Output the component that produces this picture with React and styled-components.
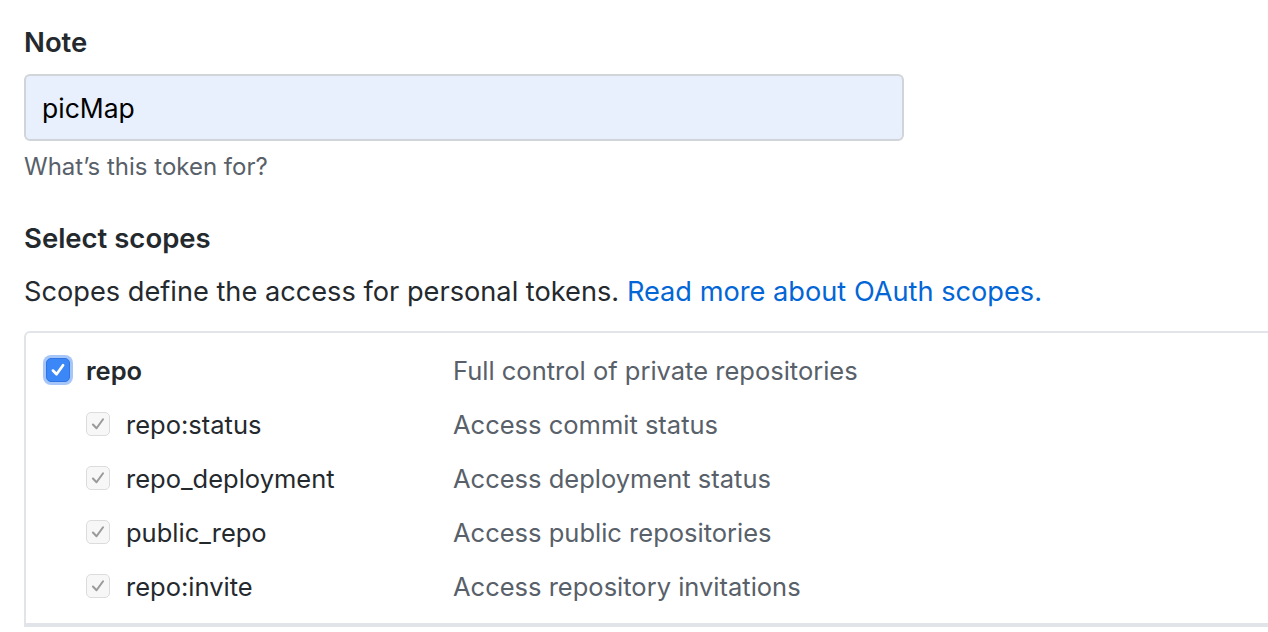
import React from 'react'
import styled, { createGlobalStyle } from 'styled-components'

const GlobalStyle = createGlobalStyle`
  html, body {
    margin: 0;
    padding: 0;
    background: #fff;
    overflow: hidden;
  }
  body {
    font-family: Inter, "Liberation Sans", Arial, sans-serif;
    color: #24292e;
  }
`

const Page = styled.div`
  padding: 26px 0 0 24px;
  width: 1400px;
`

const Label = styled.div`
  font-size: 27.5px;
  font-weight: 600;
  line-height: 32px;
  color: #24292e;
`

const Input = styled.div`
  box-sizing: border-box;
  margin-top: 16px;
  width: 880px;
  height: 67px;
  border: 2px solid #d1d5da;
  border-radius: 6px;
  background: #e8f0fe;
  padding: 0 16px;
  display: flex;
  align-items: center;
  font-size: 26.5px;
  color: #000;
`

const Hint = styled.p`
  margin: 12px 0 0;
  font-size: 24px;
  line-height: 28px;
  color: #586069;
`

const Section = styled.div`
  margin-top: 41px;
`

const Lead = styled.p`
  margin: 22px 0 0;
  font-size: 27.2px;
  line-height: 32px;
  color: #24292e;
`

const Link = styled.a`
  color: #0366d6;
  text-decoration: none;
`

const ScopeBox = styled.div`
  margin-top: 23px;
  border: 2px solid #e1e4e8;
  border-right: none;
  border-radius: 6px 0 0 0;
  padding: 10px 0 0;
  width: 1400px;
`

const Group = styled.div`
  padding-bottom: 10px;
  border-bottom: 2px solid #e1e4e8;
`

const Row = styled.div`
  display: grid;
  grid-template-columns: 427px 1fr;
  align-items: center;
  height: 54px;
`

const Name = styled.div`
  display: flex;
  align-items: center;
  gap: 16px;
  padding-left: ${p => (p.$sub ? '60px' : '20px')};
  font-size: 25.5px;
  font-weight: ${p => (p.$sub ? 'normal' : 600)};
  color: #24292e;
`

const Desc = styled.div`
  font-size: 25.5px;
  color: #586069;
`

const Box = styled.span`
  box-sizing: border-box;
  width: 24px;
  height: 24px;
  flex: none;
  border-radius: 5px;
  display: flex;
  align-items: center;
  justify-content: center;
  background: ${p => (p.$on ? '#3b87f7' : '#f7f7f7')};
  border: 1.5px solid ${p => (p.$on ? '#2f74e0' : '#dcdcdc')};
  box-shadow: ${p => (p.$on ? '0 0 0 3px rgba(92, 152, 246, 0.55)' : 'none')};
`

const Check = ({ on }) => (
  <Box $on={on}>
    <svg width="18" height="18" viewBox="0 0 16 16">
      <path
        d="M3.5 8.5 L6.7 11.8 L12.5 3.8"
        fill="none"
        stroke={on ? '#fff' : '#9a9a9a'}
        strokeWidth={on ? 2.4 : 1.8}
        strokeLinecap="round"
        strokeLinejoin="round"
      />
    </svg>
  </Box>
)

const scopes = [
  ['repo:status', 'Access commit status'],
  ['repo_deployment', 'Access deployment status'],
  ['public_repo', 'Access public repositories'],
  ['repo:invite', 'Access repository invitations'],
]

const App = () => {
  return (
    <>
      <GlobalStyle />
      <Page>
        <Label>Note</Label>
        <Input>picMap</Input>
        <Hint>What’s this token for?</Hint>
        <Section>
          <Label>Select scopes</Label>
          <Lead>
            Scopes define the access for personal tokens.{' '}
            <Link href="#">Read more about OAuth scopes.</Link>
          </Lead>
        </Section>
        <ScopeBox>
          <Group>
            <Row>
              <Name>
                <Check on />
                repo
              </Name>
              <Desc>Full control of private repositories</Desc>
            </Row>
            {scopes.map(([name, desc]) => (
              <Row key={name}>
                <Name $sub>
                  <Check />
                  {name}
                </Name>
                <Desc>{desc}</Desc>
              </Row>
            ))}
          </Group>
        </ScopeBox>
      </Page>
    </>
  )
}

export default App
